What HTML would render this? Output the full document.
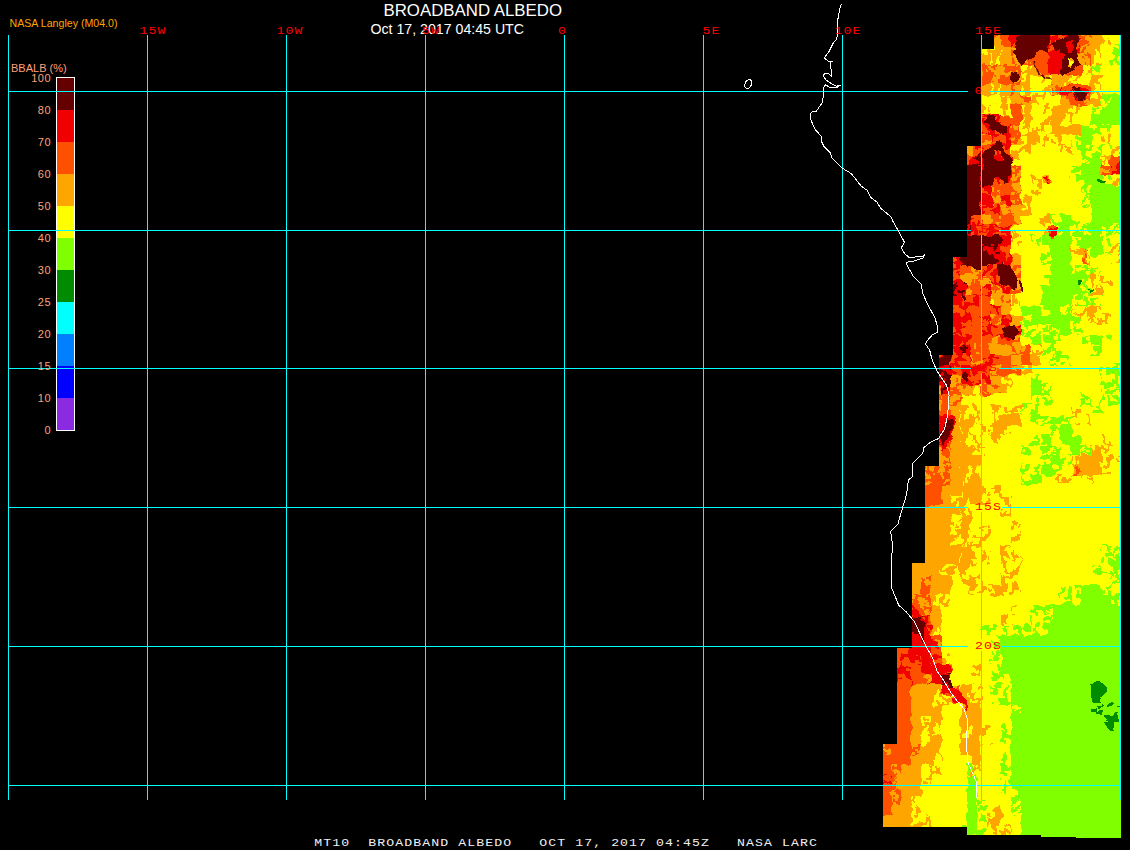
<!DOCTYPE html>
<html><head><meta charset="utf-8"><title>BROADBAND ALBEDO</title>
<style>
html,body{margin:0;padding:0;background:#000;}
body{width:1130px;height:850px;overflow:hidden;position:relative;font-family:"Liberation Sans",sans-serif;}
svg{position:absolute;left:0;top:0;display:block}
.g rect,.d rect,.d polygon{shape-rendering:crispEdges}
text{font-family:"Liberation Sans",sans-serif}
.cb{font-size:11px;fill:#ffa07a;letter-spacing:0.6px}
.mono{font-family:"Liberation Mono",monospace;font-size:12px;letter-spacing:0.98px;fill:#ff0000}
.bot{font-family:"Liberation Mono",monospace;font-size:12px;letter-spacing:0.98px;fill:#f0f0f0;white-space:pre}
.t1{font-size:17px;fill:#fff}
.t2{font-size:15px;fill:#fff}
</style></head><body>
<svg width="1130" height="850" viewBox="0 0 1130 850">
<rect width="1130" height="850" fill="#000"/>
<g class="d">
<defs>
<pattern id="pa" width="32" height="32" patternUnits="userSpaceOnUse"><rect width="32" height="32" fill="#ffa500"/><path d="M0 0h2v2h-2zM4 0h4v2h-4zM20 0h12v2h-12zM0 2h2v2h-2zM4 2h4v2h-4zM14 2h4v2h-4zM20 2h12v2h-12zM0 4h2v2h-2zM14 4h18v2h-18zM14 6h8v2h-8zM24 6h8v2h-8zM16 8h4v2h-4zM24 8h6v2h-6zM0 10h2v2h-2zM16 10h4v2h-4zM26 10h6v2h-6zM0 12h2v2h-2zM16 12h4v2h-4zM26 12h2v2h-2zM30 12h2v2h-2zM0 14h2v2h-2zM12 14h8v2h-8zM22 14h6v2h-6zM0 16h2v2h-2zM12 16h6v2h-6zM22 16h10v2h-10zM8 18h2v2h-2zM16 18h12v2h-12zM8 20h4v2h-4zM16 20h12v2h-12zM8 22h4v2h-4zM16 22h8v2h-8zM30 22h2v2h-2zM6 24h6v2h-6zM16 24h4v2h-4zM28 24h4v2h-4zM6 26h8v2h-8zM26 26h6v2h-6zM0 28h2v2h-2zM6 28h12v2h-12zM26 28h6v2h-6zM4 30h4v2h-4zM10 30h2v2h-2zM14 30h4v2h-4zM20 30h12v2h-12z" fill="#ffff00"/></pattern>
<pattern id="pb" width="32" height="32" patternUnits="userSpaceOnUse"><rect width="32" height="32" fill="#ff5000"/><path d="M8 0h2v2h-2zM16 0h6v2h-6zM24 0h4v2h-4zM6 2h6v2h-6zM28 2h4v2h-4zM0 4h2v2h-2zM4 4h8v2h-8zM28 4h4v2h-4zM0 6h12v2h-12zM24 6h2v2h-2zM30 6h2v2h-2zM0 8h22v2h-22zM0 10h8v2h-8zM12 10h10v2h-10zM2 12h6v2h-6zM12 12h4v2h-4zM26 12h6v2h-6zM0 14h14v2h-14zM18 14h4v2h-4zM24 14h6v2h-6zM0 16h6v2h-6zM10 16h8v2h-8zM20 16h8v2h-8zM0 18h6v2h-6zM10 18h6v2h-6zM22 18h4v2h-4zM30 18h2v2h-2zM2 20h4v2h-4zM10 20h8v2h-8zM30 20h2v2h-2zM10 22h8v2h-8zM22 22h8v2h-8zM6 24h2v2h-2zM14 24h2v2h-2zM20 24h12v2h-12zM0 26h2v2h-2zM14 26h2v2h-2zM22 26h6v2h-6zM30 26h2v2h-2zM0 28h2v2h-2zM14 28h2v2h-2zM22 28h10v2h-10zM0 30h2v2h-2zM6 30h2v2h-2zM22 30h6v2h-6zM30 30h2v2h-2z" fill="#ffa500"/></pattern>
<pattern id="pc" width="32" height="32" patternUnits="userSpaceOnUse"><rect width="32" height="32" fill="#f00000"/><path d="M12 0h2v2h-2zM22 0h6v2h-6zM2 2h8v2h-8zM18 2h12v2h-12zM2 4h8v2h-8zM18 4h10v2h-10zM6 6h4v2h-4zM18 6h2v2h-2zM24 6h2v2h-2zM0 8h14v2h-14zM18 8h10v2h-10zM0 10h14v2h-14zM20 10h8v2h-8zM0 12h14v2h-14zM20 12h4v2h-4zM0 14h4v2h-4zM20 14h2v2h-2zM26 14h6v2h-6zM24 16h6v2h-6zM8 18h6v2h-6zM24 18h8v2h-8zM0 20h2v2h-2zM6 20h8v2h-8zM18 20h4v2h-4zM26 20h6v2h-6zM0 22h4v2h-4zM6 22h26v2h-26zM0 24h4v2h-4zM6 24h14v2h-14zM24 24h4v2h-4zM0 26h4v2h-4zM10 26h10v2h-10zM14 28h4v2h-4zM20 28h4v2h-4zM12 30h6v2h-6zM20 30h6v2h-6z" fill="#ff5000"/></pattern>
<pattern id="pd" width="32" height="32" patternUnits="userSpaceOnUse"><rect width="32" height="32" fill="#640000"/><path d="M0 0h18v2h-18zM28 0h4v2h-4zM6 2h4v2h-4zM12 2h4v2h-4zM20 2h2v2h-2zM26 2h4v2h-4zM0 4h2v2h-2zM4 4h4v2h-4zM18 4h6v2h-6zM28 4h4v2h-4zM0 6h2v2h-2zM4 6h4v2h-4zM16 6h8v2h-8zM28 6h4v2h-4zM6 8h6v2h-6zM16 8h8v2h-8zM28 8h4v2h-4zM6 10h6v2h-6zM16 10h8v2h-8zM28 10h4v2h-4zM8 12h4v2h-4zM16 12h6v2h-6zM28 12h2v2h-2zM10 14h12v2h-12zM26 14h4v2h-4zM12 16h10v2h-10zM26 16h4v2h-4zM14 18h8v2h-8zM0 20h2v2h-2zM6 20h8v2h-8zM18 20h6v2h-6zM6 22h8v2h-8zM18 22h6v2h-6zM0 24h2v2h-2zM6 24h6v2h-6zM24 24h8v2h-8zM0 26h4v2h-4zM6 26h6v2h-6zM16 26h2v2h-2zM24 26h8v2h-8zM0 28h6v2h-6zM8 28h6v2h-6zM28 28h4v2h-4zM0 30h16v2h-16zM30 30h2v2h-2z" fill="#f00000"/></pattern>
<pattern id="pe" width="32" height="32" patternUnits="userSpaceOnUse"><rect width="32" height="32" fill="#ffff00"/><path d="M0 0h6v2h-6zM8 0h16v2h-16zM30 0h2v2h-2zM0 2h12v2h-12zM18 2h4v2h-4zM28 2h2v2h-2zM0 4h14v2h-14zM18 4h2v2h-2zM26 4h6v2h-6zM0 6h4v2h-4zM12 6h2v2h-2zM20 6h2v2h-2zM24 6h4v2h-4zM18 8h8v2h-8zM4 10h6v2h-6zM18 10h8v2h-8zM28 10h4v2h-4zM0 12h2v2h-2zM4 12h4v2h-4zM14 12h2v2h-2zM26 12h6v2h-6zM2 14h6v2h-6zM12 14h4v2h-4zM20 14h2v2h-2zM28 14h4v2h-4zM2 16h4v2h-4zM12 16h4v2h-4zM20 16h10v2h-10zM2 18h4v2h-4zM12 18h2v2h-2zM20 18h10v2h-10zM0 20h6v2h-6zM10 20h4v2h-4zM20 20h12v2h-12zM10 22h4v2h-4zM26 22h6v2h-6zM12 24h2v2h-2zM26 24h4v2h-4zM6 26h8v2h-8zM26 26h4v2h-4zM6 28h10v2h-10zM22 28h8v2h-8zM8 30h18v2h-18zM28 30h4v2h-4z" fill="#7fff00"/></pattern>
<pattern id="pn" width="32" height="32" patternUnits="userSpaceOnUse"><rect width="32" height="32" fill="#7fff00"/><path d="M8 0h6v2h-6zM18 0h4v2h-4zM26 0h4v2h-4zM8 2h4v2h-4zM6 4h2v2h-2zM0 6h8v2h-8zM10 6h6v2h-6zM28 6h4v2h-4zM0 8h16v2h-16zM28 8h4v2h-4zM6 10h12v2h-12zM26 10h6v2h-6zM4 12h4v2h-4zM10 12h12v2h-12zM2 14h8v2h-8zM14 14h10v2h-10zM2 16h2v2h-2zM6 16h18v2h-18zM0 18h4v2h-4zM8 18h10v2h-10zM20 18h4v2h-4zM30 18h2v2h-2zM0 20h6v2h-6zM10 20h6v2h-6zM20 20h2v2h-2zM28 20h4v2h-4zM0 22h8v2h-8zM10 22h4v2h-4zM20 22h4v2h-4zM30 22h2v2h-2zM0 24h2v2h-2zM4 24h2v2h-2zM12 24h12v2h-12zM30 24h2v2h-2zM0 26h6v2h-6zM12 26h10v2h-10zM30 26h2v2h-2zM6 28h2v2h-2zM12 28h12v2h-12zM28 28h4v2h-4zM6 30h4v2h-4zM12 30h2v2h-2zM18 30h6v2h-6zM28 30h4v2h-4z" fill="#008b00"/></pattern>
<clipPath id="swath"><polygon points="994,35 1121,35 1121,838 1076,838 1076,837 1041,837 1041,835 967,835 967,827 883,827 883,744 897,744 897,648 912,648 912,563 925,563 925,466 939,466 939,355 953,355 953,257 967,257 967,146 981,146 981,49 994,49"/></clipPath>
<filter id="wob" filterUnits="userSpaceOnUse" x="870" y="25" width="260" height="825" color-interpolation-filters="sRGB"><feTurbulence type="fractalNoise" baseFrequency="0.09" numOctaves="2" seed="7" result="n"/><feDisplacementMap in="SourceGraphic" in2="n" scale="9" xChannelSelector="R" yChannelSelector="G"/></filter>
</defs>
<g clip-path="url(#swath)"><g filter="url(#wob)">
<rect x="870" y="25" width="260" height="825" fill="#ffff00"/>
<rect x="991" y="25" width="10" height="10" fill="url(#pb)"/>
<rect x="1001" y="25" width="10" height="10" fill="#ff5000"/>
<rect x="1011" y="25" width="10" height="10" fill="#f00000"/>
<rect x="1021" y="25" width="60" height="10" fill="url(#pc)"/>
<rect x="1081" y="25" width="10" height="10" fill="url(#pb)"/>
<rect x="1091" y="25" width="10" height="10" fill="#ffa500"/>
<rect x="1101" y="25" width="10" height="10" fill="url(#pa)"/>
<rect x="991" y="35" width="10" height="10" fill="url(#pb)"/>
<rect x="1001" y="35" width="10" height="10" fill="#ff5000"/>
<rect x="1011" y="35" width="10" height="10" fill="#f00000"/>
<rect x="1021" y="35" width="60" height="10" fill="url(#pc)"/>
<rect x="1081" y="35" width="10" height="10" fill="url(#pb)"/>
<rect x="1091" y="35" width="10" height="10" fill="#ffa500"/>
<rect x="1101" y="35" width="10" height="10" fill="url(#pa)"/>
<rect x="871" y="45" width="130" height="10" fill="url(#pa)"/>
<rect x="1001" y="45" width="10" height="10" fill="#ffa500"/>
<rect x="1011" y="45" width="10" height="10" fill="url(#pb)"/>
<rect x="1021" y="45" width="60" height="10" fill="url(#pc)"/>
<rect x="1081" y="45" width="10" height="10" fill="url(#pb)"/>
<rect x="1091" y="45" width="10" height="10" fill="url(#pa)"/>
<rect x="1111" y="45" width="20" height="10" fill="url(#pe)"/>
<rect x="871" y="55" width="120" height="10" fill="#ffa500"/>
<rect x="991" y="55" width="10" height="10" fill="url(#pa)"/>
<rect x="1001" y="55" width="10" height="10" fill="#ffa500"/>
<rect x="1011" y="55" width="20" height="10" fill="url(#pb)"/>
<rect x="1031" y="55" width="10" height="10" fill="#ff5000"/>
<rect x="1041" y="55" width="10" height="10" fill="url(#pc)"/>
<rect x="1051" y="55" width="10" height="10" fill="#f00000"/>
<rect x="1061" y="55" width="10" height="10" fill="url(#pc)"/>
<rect x="1071" y="55" width="20" height="10" fill="url(#pb)"/>
<rect x="1091" y="55" width="10" height="10" fill="url(#pa)"/>
<rect x="1111" y="55" width="20" height="10" fill="url(#pe)"/>
<rect x="871" y="65" width="150" height="10" fill="url(#pb)"/>
<rect x="1021" y="65" width="10" height="10" fill="url(#pa)"/>
<rect x="1031" y="65" width="10" height="10" fill="#ffa500"/>
<rect x="1041" y="65" width="10" height="10" fill="url(#pc)"/>
<rect x="1051" y="65" width="10" height="10" fill="#f00000"/>
<rect x="1061" y="65" width="10" height="10" fill="url(#pc)"/>
<rect x="1071" y="65" width="10" height="10" fill="#ff5000"/>
<rect x="1081" y="65" width="10" height="10" fill="url(#pa)"/>
<rect x="1091" y="65" width="10" height="10" fill="url(#pe)"/>
<rect x="871" y="75" width="120" height="10" fill="#ff5000"/>
<rect x="991" y="75" width="10" height="10" fill="url(#pb)"/>
<rect x="1001" y="75" width="10" height="10" fill="#ff5000"/>
<rect x="1011" y="75" width="10" height="10" fill="url(#pb)"/>
<rect x="1021" y="75" width="10" height="10" fill="url(#pa)"/>
<rect x="1041" y="75" width="10" height="10" fill="url(#pa)"/>
<rect x="1051" y="75" width="10" height="10" fill="#ffa500"/>
<rect x="1061" y="75" width="20" height="10" fill="url(#pa)"/>
<rect x="1091" y="75" width="10" height="10" fill="url(#pa)"/>
<rect x="871" y="85" width="120" height="10" fill="#ffa500"/>
<rect x="991" y="85" width="10" height="10" fill="url(#pa)"/>
<rect x="1001" y="85" width="10" height="10" fill="#ffa500"/>
<rect x="1011" y="85" width="10" height="10" fill="url(#pb)"/>
<rect x="1021" y="85" width="10" height="10" fill="url(#pa)"/>
<rect x="1041" y="85" width="10" height="10" fill="url(#pa)"/>
<rect x="1051" y="85" width="10" height="10" fill="url(#pb)"/>
<rect x="1061" y="85" width="10" height="10" fill="url(#pc)"/>
<rect x="1071" y="85" width="20" height="10" fill="#ff5000"/>
<rect x="1091" y="85" width="10" height="10" fill="url(#pa)"/>
<rect x="1001" y="95" width="10" height="10" fill="url(#pa)"/>
<rect x="1011" y="95" width="10" height="10" fill="#ffa500"/>
<rect x="1021" y="95" width="10" height="10" fill="url(#pb)"/>
<rect x="1031" y="95" width="20" height="10" fill="url(#pa)"/>
<rect x="1061" y="95" width="30" height="10" fill="url(#pb)"/>
<rect x="1091" y="95" width="10" height="10" fill="url(#pa)"/>
<rect x="1101" y="95" width="10" height="10" fill="url(#pe)"/>
<rect x="1111" y="95" width="20" height="10" fill="#7fff00"/>
<rect x="871" y="105" width="120" height="10" fill="url(#pa)"/>
<rect x="1001" y="105" width="10" height="10" fill="url(#pa)"/>
<rect x="1011" y="105" width="10" height="10" fill="#ff5000"/>
<rect x="1021" y="105" width="10" height="10" fill="url(#pa)"/>
<rect x="1041" y="105" width="10" height="10" fill="url(#pa)"/>
<rect x="1051" y="105" width="10" height="10" fill="#ffa500"/>
<rect x="1061" y="105" width="20" height="10" fill="url(#pa)"/>
<rect x="1091" y="105" width="10" height="10" fill="url(#pe)"/>
<rect x="1101" y="105" width="30" height="10" fill="#7fff00"/>
<rect x="871" y="115" width="130" height="10" fill="url(#pc)"/>
<rect x="1001" y="115" width="20" height="10" fill="#ff5000"/>
<rect x="1021" y="115" width="10" height="10" fill="url(#pa)"/>
<rect x="1041" y="115" width="10" height="10" fill="url(#pa)"/>
<rect x="1051" y="115" width="10" height="10" fill="#ffa500"/>
<rect x="1061" y="115" width="10" height="10" fill="url(#pa)"/>
<rect x="1091" y="115" width="40" height="10" fill="#7fff00"/>
<rect x="871" y="125" width="140" height="10" fill="url(#pc)"/>
<rect x="1011" y="125" width="10" height="10" fill="url(#pb)"/>
<rect x="1021" y="125" width="30" height="10" fill="url(#pa)"/>
<rect x="1051" y="125" width="30" height="10" fill="#ffa500"/>
<rect x="1081" y="125" width="10" height="10" fill="#7fff00"/>
<rect x="1091" y="125" width="20" height="10" fill="url(#pe)"/>
<rect x="871" y="135" width="120" height="10" fill="url(#pb)"/>
<rect x="991" y="135" width="20" height="10" fill="url(#pc)"/>
<rect x="1011" y="135" width="10" height="10" fill="url(#pb)"/>
<rect x="1021" y="135" width="40" height="10" fill="url(#pa)"/>
<rect x="1071" y="135" width="10" height="10" fill="url(#pe)"/>
<rect x="1081" y="135" width="10" height="10" fill="#7fff00"/>
<rect x="1101" y="135" width="10" height="10" fill="url(#pa)"/>
<rect x="871" y="145" width="100" height="10" fill="#ffa500"/>
<rect x="971" y="145" width="40" height="10" fill="url(#pc)"/>
<rect x="1011" y="145" width="20" height="10" fill="url(#pa)"/>
<rect x="1061" y="145" width="10" height="10" fill="url(#pa)"/>
<rect x="1071" y="145" width="40" height="10" fill="url(#pe)"/>
<rect x="1111" y="145" width="20" height="10" fill="url(#pa)"/>
<rect x="871" y="155" width="100" height="10" fill="#ff5000"/>
<rect x="971" y="155" width="10" height="10" fill="url(#pd)"/>
<rect x="981" y="155" width="10" height="10" fill="#f00000"/>
<rect x="991" y="155" width="20" height="10" fill="url(#pc)"/>
<rect x="1011" y="155" width="10" height="10" fill="url(#pa)"/>
<rect x="1081" y="155" width="10" height="10" fill="url(#pe)"/>
<rect x="1091" y="155" width="10" height="10" fill="#7fff00"/>
<rect x="1101" y="155" width="10" height="10" fill="url(#pa)"/>
<rect x="1111" y="155" width="20" height="10" fill="#ff5000"/>
<rect x="871" y="165" width="110" height="10" fill="#640000"/>
<rect x="981" y="165" width="20" height="10" fill="#f00000"/>
<rect x="1001" y="165" width="10" height="10" fill="url(#pc)"/>
<rect x="1011" y="165" width="10" height="10" fill="url(#pb)"/>
<rect x="1071" y="165" width="10" height="10" fill="url(#pe)"/>
<rect x="1081" y="165" width="20" height="10" fill="#7fff00"/>
<rect x="1101" y="165" width="10" height="10" fill="url(#pb)"/>
<rect x="1111" y="165" width="20" height="10" fill="url(#pc)"/>
<rect x="871" y="175" width="110" height="10" fill="#640000"/>
<rect x="981" y="175" width="10" height="10" fill="#f00000"/>
<rect x="991" y="175" width="20" height="10" fill="url(#pc)"/>
<rect x="1011" y="175" width="10" height="10" fill="url(#pb)"/>
<rect x="1031" y="175" width="10" height="10" fill="url(#pa)"/>
<rect x="1041" y="175" width="10" height="10" fill="#ffa500"/>
<rect x="1071" y="175" width="10" height="10" fill="url(#pe)"/>
<rect x="1081" y="175" width="20" height="10" fill="#7fff00"/>
<rect x="1101" y="175" width="10" height="10" fill="url(#pe)"/>
<rect x="1111" y="175" width="20" height="10" fill="url(#pa)"/>
<rect x="871" y="185" width="110" height="10" fill="#640000"/>
<rect x="981" y="185" width="10" height="10" fill="url(#pc)"/>
<rect x="991" y="185" width="10" height="10" fill="url(#pb)"/>
<rect x="1001" y="185" width="10" height="10" fill="#ff5000"/>
<rect x="1011" y="185" width="10" height="10" fill="url(#pb)"/>
<rect x="1031" y="185" width="10" height="10" fill="url(#pa)"/>
<rect x="1081" y="185" width="10" height="10" fill="url(#pe)"/>
<rect x="1091" y="185" width="40" height="10" fill="#7fff00"/>
<rect x="871" y="195" width="110" height="10" fill="#640000"/>
<rect x="981" y="195" width="10" height="10" fill="#f00000"/>
<rect x="991" y="195" width="10" height="10" fill="url(#pb)"/>
<rect x="1001" y="195" width="10" height="10" fill="url(#pc)"/>
<rect x="1011" y="195" width="10" height="10" fill="url(#pb)"/>
<rect x="1021" y="195" width="10" height="10" fill="url(#pa)"/>
<rect x="1081" y="195" width="10" height="10" fill="url(#pe)"/>
<rect x="1091" y="195" width="40" height="10" fill="#7fff00"/>
<rect x="871" y="205" width="110" height="10" fill="#640000"/>
<rect x="981" y="205" width="20" height="10" fill="url(#pc)"/>
<rect x="1001" y="205" width="10" height="10" fill="url(#pb)"/>
<rect x="1011" y="205" width="10" height="10" fill="#ffa500"/>
<rect x="1021" y="205" width="10" height="10" fill="url(#pa)"/>
<rect x="1091" y="205" width="40" height="10" fill="#7fff00"/>
<rect x="871" y="215" width="100" height="10" fill="#640000"/>
<rect x="971" y="215" width="10" height="10" fill="url(#pc)"/>
<rect x="981" y="215" width="10" height="10" fill="#ffa500"/>
<rect x="991" y="215" width="10" height="10" fill="url(#pb)"/>
<rect x="1001" y="215" width="10" height="10" fill="#ff5000"/>
<rect x="1011" y="215" width="10" height="10" fill="url(#pb)"/>
<rect x="1041" y="215" width="10" height="10" fill="url(#pa)"/>
<rect x="1051" y="215" width="10" height="10" fill="url(#pe)"/>
<rect x="1061" y="215" width="10" height="10" fill="#7fff00"/>
<rect x="1071" y="215" width="10" height="10" fill="url(#pe)"/>
<rect x="1091" y="215" width="40" height="10" fill="#7fff00"/>
<rect x="871" y="225" width="100" height="10" fill="url(#pd)"/>
<rect x="971" y="225" width="40" height="10" fill="url(#pc)"/>
<rect x="1011" y="225" width="10" height="10" fill="url(#pa)"/>
<rect x="1041" y="225" width="10" height="10" fill="url(#pa)"/>
<rect x="1051" y="225" width="10" height="10" fill="url(#pe)"/>
<rect x="1061" y="225" width="10" height="10" fill="#7fff00"/>
<rect x="1071" y="225" width="20" height="10" fill="url(#pe)"/>
<rect x="1091" y="225" width="10" height="10" fill="#7fff00"/>
<rect x="1101" y="225" width="30" height="10" fill="url(#pe)"/>
<rect x="871" y="235" width="120" height="10" fill="#640000"/>
<rect x="991" y="235" width="10" height="10" fill="url(#pd)"/>
<rect x="1001" y="235" width="10" height="10" fill="#f00000"/>
<rect x="1011" y="235" width="10" height="10" fill="url(#pa)"/>
<rect x="1031" y="235" width="10" height="10" fill="url(#pe)"/>
<rect x="1041" y="235" width="30" height="10" fill="#7fff00"/>
<rect x="1071" y="235" width="10" height="10" fill="url(#pe)"/>
<rect x="1081" y="235" width="20" height="10" fill="#7fff00"/>
<rect x="1101" y="235" width="10" height="10" fill="url(#pe)"/>
<rect x="871" y="245" width="110" height="10" fill="#640000"/>
<rect x="981" y="245" width="20" height="10" fill="url(#pd)"/>
<rect x="1001" y="245" width="10" height="10" fill="url(#pc)"/>
<rect x="1041" y="245" width="10" height="10" fill="url(#pe)"/>
<rect x="1051" y="245" width="20" height="10" fill="#7fff00"/>
<rect x="1071" y="245" width="10" height="10" fill="url(#pa)"/>
<rect x="1081" y="245" width="10" height="10" fill="url(#pe)"/>
<rect x="1091" y="245" width="10" height="10" fill="#7fff00"/>
<rect x="1101" y="245" width="10" height="10" fill="url(#pe)"/>
<rect x="1111" y="245" width="20" height="10" fill="url(#pa)"/>
<rect x="871" y="255" width="90" height="10" fill="url(#pc)"/>
<rect x="961" y="255" width="10" height="10" fill="url(#pd)"/>
<rect x="971" y="255" width="20" height="10" fill="#640000"/>
<rect x="991" y="255" width="10" height="10" fill="url(#pd)"/>
<rect x="1001" y="255" width="10" height="10" fill="url(#pc)"/>
<rect x="1011" y="255" width="10" height="10" fill="#ffa500"/>
<rect x="1041" y="255" width="10" height="10" fill="url(#pe)"/>
<rect x="1051" y="255" width="20" height="10" fill="#7fff00"/>
<rect x="1081" y="255" width="10" height="10" fill="url(#pa)"/>
<rect x="1111" y="255" width="20" height="10" fill="url(#pa)"/>
<rect x="871" y="265" width="90" height="10" fill="url(#pc)"/>
<rect x="961" y="265" width="10" height="10" fill="#ff5000"/>
<rect x="971" y="265" width="10" height="10" fill="url(#pb)"/>
<rect x="981" y="265" width="30" height="10" fill="url(#pc)"/>
<rect x="1011" y="265" width="10" height="10" fill="url(#pb)"/>
<rect x="1051" y="265" width="20" height="10" fill="#7fff00"/>
<rect x="1071" y="265" width="30" height="10" fill="url(#pe)"/>
<rect x="871" y="275" width="90" height="10" fill="url(#pc)"/>
<rect x="961" y="275" width="10" height="10" fill="#ffa500"/>
<rect x="971" y="275" width="20" height="10" fill="url(#pb)"/>
<rect x="991" y="275" width="20" height="10" fill="url(#pc)"/>
<rect x="1011" y="275" width="10" height="10" fill="url(#pb)"/>
<rect x="1041" y="275" width="10" height="10" fill="url(#pe)"/>
<rect x="1051" y="275" width="30" height="10" fill="#7fff00"/>
<rect x="1081" y="275" width="10" height="10" fill="url(#pe)"/>
<rect x="1091" y="275" width="20" height="10" fill="url(#pa)"/>
<rect x="871" y="285" width="90" height="10" fill="url(#pd)"/>
<rect x="961" y="285" width="10" height="10" fill="url(#pb)"/>
<rect x="971" y="285" width="10" height="10" fill="#ff5000"/>
<rect x="981" y="285" width="10" height="10" fill="url(#pc)"/>
<rect x="991" y="285" width="10" height="10" fill="url(#pb)"/>
<rect x="1001" y="285" width="10" height="10" fill="url(#pc)"/>
<rect x="1011" y="285" width="10" height="10" fill="url(#pb)"/>
<rect x="1041" y="285" width="40" height="10" fill="#7fff00"/>
<rect x="1081" y="285" width="10" height="10" fill="url(#pe)"/>
<rect x="1091" y="285" width="10" height="10" fill="url(#pa)"/>
<rect x="871" y="295" width="90" height="10" fill="#f00000"/>
<rect x="961" y="295" width="20" height="10" fill="url(#pc)"/>
<rect x="981" y="295" width="10" height="10" fill="#ff5000"/>
<rect x="991" y="295" width="10" height="10" fill="url(#pa)"/>
<rect x="1001" y="295" width="10" height="10" fill="url(#pb)"/>
<rect x="1011" y="295" width="10" height="10" fill="url(#pa)"/>
<rect x="1041" y="295" width="30" height="10" fill="#7fff00"/>
<rect x="1071" y="295" width="30" height="10" fill="url(#pe)"/>
<rect x="871" y="305" width="100" height="10" fill="url(#pc)"/>
<rect x="971" y="305" width="20" height="10" fill="#ff5000"/>
<rect x="991" y="305" width="10" height="10" fill="url(#pc)"/>
<rect x="1001" y="305" width="10" height="10" fill="#ffa500"/>
<rect x="1021" y="305" width="20" height="10" fill="#7fff00"/>
<rect x="1041" y="305" width="10" height="10" fill="url(#pe)"/>
<rect x="1051" y="305" width="10" height="10" fill="#7fff00"/>
<rect x="1061" y="305" width="10" height="10" fill="url(#pe)"/>
<rect x="1071" y="305" width="30" height="10" fill="url(#pa)"/>
<rect x="871" y="315" width="90" height="10" fill="#f00000"/>
<rect x="961" y="315" width="10" height="10" fill="url(#pc)"/>
<rect x="971" y="315" width="10" height="10" fill="#ff5000"/>
<rect x="981" y="315" width="10" height="10" fill="url(#pc)"/>
<rect x="991" y="315" width="10" height="10" fill="url(#pb)"/>
<rect x="1001" y="315" width="10" height="10" fill="url(#pc)"/>
<rect x="1011" y="315" width="10" height="10" fill="#ffa500"/>
<rect x="1021" y="315" width="10" height="10" fill="url(#pe)"/>
<rect x="1031" y="315" width="40" height="10" fill="#7fff00"/>
<rect x="1071" y="315" width="10" height="10" fill="url(#pe)"/>
<rect x="1081" y="315" width="30" height="10" fill="url(#pa)"/>
<rect x="871" y="325" width="100" height="10" fill="url(#pc)"/>
<rect x="971" y="325" width="10" height="10" fill="#ff5000"/>
<rect x="981" y="325" width="40" height="10" fill="url(#pc)"/>
<rect x="1021" y="325" width="40" height="10" fill="url(#pe)"/>
<rect x="1061" y="325" width="10" height="10" fill="#7fff00"/>
<rect x="1071" y="325" width="10" height="10" fill="url(#pe)"/>
<rect x="871" y="335" width="90" height="10" fill="#f00000"/>
<rect x="961" y="335" width="10" height="10" fill="url(#pc)"/>
<rect x="971" y="335" width="20" height="10" fill="#ff5000"/>
<rect x="991" y="335" width="10" height="10" fill="url(#pb)"/>
<rect x="1001" y="335" width="10" height="10" fill="url(#pc)"/>
<rect x="1011" y="335" width="10" height="10" fill="url(#pb)"/>
<rect x="1031" y="335" width="10" height="10" fill="#7fff00"/>
<rect x="1041" y="335" width="20" height="10" fill="url(#pe)"/>
<rect x="1081" y="335" width="10" height="10" fill="url(#pe)"/>
<rect x="1091" y="335" width="10" height="10" fill="#7fff00"/>
<rect x="1101" y="335" width="10" height="10" fill="url(#pe)"/>
<rect x="871" y="345" width="90" height="10" fill="url(#pc)"/>
<rect x="961" y="345" width="10" height="10" fill="url(#pd)"/>
<rect x="971" y="345" width="10" height="10" fill="url(#pb)"/>
<rect x="981" y="345" width="10" height="10" fill="#ff5000"/>
<rect x="991" y="345" width="20" height="10" fill="#ffa500"/>
<rect x="1011" y="345" width="20" height="10" fill="url(#pb)"/>
<rect x="1031" y="345" width="10" height="10" fill="url(#pa)"/>
<rect x="1041" y="345" width="20" height="10" fill="url(#pe)"/>
<rect x="1091" y="345" width="10" height="10" fill="url(#pe)"/>
<rect x="871" y="355" width="80" height="10" fill="#640000"/>
<rect x="951" y="355" width="20" height="10" fill="url(#pc)"/>
<rect x="971" y="355" width="10" height="10" fill="url(#pb)"/>
<rect x="981" y="355" width="20" height="10" fill="url(#pc)"/>
<rect x="1001" y="355" width="10" height="10" fill="#ff5000"/>
<rect x="1011" y="355" width="10" height="10" fill="#ffa500"/>
<rect x="1021" y="355" width="10" height="10" fill="#ff5000"/>
<rect x="1031" y="355" width="10" height="10" fill="#ffa500"/>
<rect x="1051" y="355" width="20" height="10" fill="url(#pe)"/>
<rect x="871" y="365" width="80" height="10" fill="url(#pd)"/>
<rect x="951" y="365" width="10" height="10" fill="url(#pc)"/>
<rect x="961" y="365" width="10" height="10" fill="#f00000"/>
<rect x="971" y="365" width="20" height="10" fill="url(#pc)"/>
<rect x="991" y="365" width="10" height="10" fill="url(#pb)"/>
<rect x="1001" y="365" width="10" height="10" fill="#ff5000"/>
<rect x="1011" y="365" width="10" height="10" fill="url(#pb)"/>
<rect x="1021" y="365" width="10" height="10" fill="url(#pa)"/>
<rect x="1101" y="365" width="30" height="10" fill="url(#pe)"/>
<rect x="871" y="375" width="80" height="10" fill="url(#pd)"/>
<rect x="951" y="375" width="10" height="10" fill="url(#pb)"/>
<rect x="961" y="375" width="30" height="10" fill="url(#pc)"/>
<rect x="991" y="375" width="10" height="10" fill="#ffa500"/>
<rect x="1001" y="375" width="10" height="10" fill="url(#pa)"/>
<rect x="1031" y="375" width="10" height="10" fill="url(#pe)"/>
<rect x="1101" y="375" width="30" height="10" fill="url(#pe)"/>
<rect x="871" y="385" width="70" height="10" fill="url(#pb)"/>
<rect x="941" y="385" width="10" height="10" fill="url(#pd)"/>
<rect x="951" y="385" width="20" height="10" fill="url(#pb)"/>
<rect x="971" y="385" width="10" height="10" fill="url(#pa)"/>
<rect x="981" y="385" width="20" height="10" fill="url(#pb)"/>
<rect x="1001" y="385" width="10" height="10" fill="url(#pa)"/>
<rect x="1031" y="385" width="10" height="10" fill="#7fff00"/>
<rect x="1041" y="385" width="10" height="10" fill="url(#pe)"/>
<rect x="1101" y="385" width="30" height="10" fill="url(#pe)"/>
<rect x="871" y="395" width="70" height="10" fill="url(#pb)"/>
<rect x="941" y="395" width="10" height="10" fill="#ff5000"/>
<rect x="951" y="395" width="10" height="10" fill="url(#pb)"/>
<rect x="1031" y="395" width="20" height="10" fill="url(#pe)"/>
<rect x="1081" y="395" width="10" height="10" fill="url(#pe)"/>
<rect x="1101" y="395" width="30" height="10" fill="url(#pe)"/>
<rect x="871" y="405" width="70" height="10" fill="url(#pb)"/>
<rect x="941" y="405" width="10" height="10" fill="#ff5000"/>
<rect x="951" y="405" width="10" height="10" fill="#ffa500"/>
<rect x="961" y="405" width="20" height="10" fill="url(#pa)"/>
<rect x="991" y="405" width="30" height="10" fill="url(#pa)"/>
<rect x="1021" y="405" width="20" height="10" fill="url(#pe)"/>
<rect x="1071" y="405" width="10" height="10" fill="url(#pa)"/>
<rect x="1091" y="405" width="10" height="10" fill="url(#pe)"/>
<rect x="871" y="415" width="70" height="10" fill="url(#pc)"/>
<rect x="941" y="415" width="10" height="10" fill="url(#pb)"/>
<rect x="951" y="415" width="10" height="10" fill="#ffa500"/>
<rect x="961" y="415" width="40" height="10" fill="url(#pa)"/>
<rect x="1001" y="415" width="20" height="10" fill="#ffa500"/>
<rect x="1031" y="415" width="20" height="10" fill="url(#pe)"/>
<rect x="1051" y="415" width="10" height="10" fill="#7fff00"/>
<rect x="1061" y="415" width="10" height="10" fill="url(#pe)"/>
<rect x="1071" y="415" width="20" height="10" fill="url(#pa)"/>
<rect x="871" y="425" width="70" height="10" fill="url(#pc)"/>
<rect x="941" y="425" width="10" height="10" fill="url(#pb)"/>
<rect x="951" y="425" width="10" height="10" fill="#ffa500"/>
<rect x="961" y="425" width="10" height="10" fill="url(#pa)"/>
<rect x="981" y="425" width="30" height="10" fill="url(#pa)"/>
<rect x="1051" y="425" width="10" height="10" fill="url(#pe)"/>
<rect x="1061" y="425" width="10" height="10" fill="#7fff00"/>
<rect x="871" y="435" width="70" height="10" fill="url(#pc)"/>
<rect x="941" y="435" width="10" height="10" fill="url(#pb)"/>
<rect x="951" y="435" width="10" height="10" fill="#ffa500"/>
<rect x="961" y="435" width="20" height="10" fill="url(#pa)"/>
<rect x="991" y="435" width="10" height="10" fill="url(#pa)"/>
<rect x="1031" y="435" width="10" height="10" fill="url(#pe)"/>
<rect x="1041" y="435" width="10" height="10" fill="#7fff00"/>
<rect x="1061" y="435" width="20" height="10" fill="#7fff00"/>
<rect x="1101" y="435" width="10" height="10" fill="url(#pa)"/>
<rect x="871" y="445" width="80" height="10" fill="url(#pb)"/>
<rect x="951" y="445" width="20" height="10" fill="#ffa500"/>
<rect x="971" y="445" width="20" height="10" fill="url(#pa)"/>
<rect x="1021" y="445" width="10" height="10" fill="url(#pe)"/>
<rect x="1041" y="445" width="20" height="10" fill="url(#pe)"/>
<rect x="1071" y="445" width="10" height="10" fill="#7fff00"/>
<rect x="1081" y="445" width="10" height="10" fill="url(#pe)"/>
<rect x="1091" y="445" width="40" height="10" fill="url(#pa)"/>
<rect x="871" y="455" width="70" height="10" fill="#ffa500"/>
<rect x="941" y="455" width="10" height="10" fill="url(#pb)"/>
<rect x="951" y="455" width="30" height="10" fill="#ffa500"/>
<rect x="1041" y="455" width="10" height="10" fill="url(#pe)"/>
<rect x="1051" y="455" width="10" height="10" fill="#7fff00"/>
<rect x="1061" y="455" width="10" height="10" fill="url(#pe)"/>
<rect x="1071" y="455" width="10" height="10" fill="url(#pa)"/>
<rect x="1081" y="455" width="10" height="10" fill="#ffa500"/>
<rect x="1091" y="455" width="40" height="10" fill="url(#pa)"/>
<rect x="871" y="465" width="80" height="10" fill="url(#pb)"/>
<rect x="951" y="465" width="10" height="10" fill="#ffa500"/>
<rect x="961" y="465" width="20" height="10" fill="url(#pa)"/>
<rect x="1021" y="465" width="20" height="10" fill="url(#pe)"/>
<rect x="1041" y="465" width="10" height="10" fill="#7fff00"/>
<rect x="1051" y="465" width="10" height="10" fill="url(#pe)"/>
<rect x="1071" y="465" width="10" height="10" fill="url(#pb)"/>
<rect x="1081" y="465" width="20" height="10" fill="#ffa500"/>
<rect x="1101" y="465" width="10" height="10" fill="url(#pa)"/>
<rect x="871" y="475" width="60" height="10" fill="url(#pb)"/>
<rect x="931" y="475" width="10" height="10" fill="#ff5000"/>
<rect x="941" y="475" width="10" height="10" fill="url(#pb)"/>
<rect x="951" y="475" width="10" height="10" fill="#ffa500"/>
<rect x="961" y="475" width="10" height="10" fill="url(#pa)"/>
<rect x="971" y="475" width="10" height="10" fill="#ffa500"/>
<rect x="1021" y="475" width="10" height="10" fill="url(#pe)"/>
<rect x="1031" y="475" width="10" height="10" fill="#7fff00"/>
<rect x="1051" y="475" width="20" height="10" fill="url(#pa)"/>
<rect x="1081" y="475" width="10" height="10" fill="url(#pa)"/>
<rect x="871" y="485" width="70" height="10" fill="#ff5000"/>
<rect x="941" y="485" width="20" height="10" fill="#ffa500"/>
<rect x="961" y="485" width="10" height="10" fill="url(#pa)"/>
<rect x="971" y="485" width="10" height="10" fill="#ffa500"/>
<rect x="981" y="485" width="20" height="10" fill="url(#pa)"/>
<rect x="871" y="495" width="70" height="10" fill="#ff5000"/>
<rect x="941" y="495" width="10" height="10" fill="#ffa500"/>
<rect x="951" y="495" width="20" height="10" fill="url(#pa)"/>
<rect x="971" y="495" width="10" height="10" fill="#ffa500"/>
<rect x="981" y="495" width="10" height="10" fill="url(#pa)"/>
<rect x="1001" y="495" width="10" height="10" fill="url(#pa)"/>
<rect x="871" y="505" width="90" height="10" fill="#ffa500"/>
<rect x="961" y="505" width="10" height="10" fill="url(#pa)"/>
<rect x="1001" y="505" width="10" height="10" fill="url(#pa)"/>
<rect x="871" y="515" width="80" height="10" fill="#ffa500"/>
<rect x="951" y="515" width="20" height="10" fill="url(#pa)"/>
<rect x="1011" y="515" width="10" height="10" fill="url(#pa)"/>
<rect x="871" y="525" width="80" height="10" fill="#ffa500"/>
<rect x="951" y="525" width="20" height="10" fill="url(#pa)"/>
<rect x="981" y="525" width="10" height="10" fill="url(#pa)"/>
<rect x="1011" y="525" width="10" height="10" fill="url(#pa)"/>
<rect x="871" y="535" width="80" height="10" fill="#ffa500"/>
<rect x="951" y="535" width="40" height="10" fill="url(#pa)"/>
<rect x="1011" y="535" width="10" height="10" fill="url(#pa)"/>
<rect x="871" y="545" width="90" height="10" fill="#ffa500"/>
<rect x="961" y="545" width="30" height="10" fill="url(#pa)"/>
<rect x="1001" y="545" width="20" height="10" fill="url(#pa)"/>
<rect x="1101" y="545" width="30" height="10" fill="url(#pe)"/>
<rect x="871" y="555" width="90" height="10" fill="#ffa500"/>
<rect x="961" y="555" width="30" height="10" fill="url(#pa)"/>
<rect x="1001" y="555" width="20" height="10" fill="url(#pa)"/>
<rect x="1101" y="555" width="30" height="10" fill="url(#pe)"/>
<rect x="871" y="565" width="70" height="10" fill="#ffa500"/>
<rect x="941" y="565" width="30" height="10" fill="url(#pa)"/>
<rect x="1001" y="565" width="20" height="10" fill="url(#pa)"/>
<rect x="1091" y="565" width="40" height="10" fill="url(#pe)"/>
<rect x="871" y="575" width="50" height="10" fill="#ffa500"/>
<rect x="921" y="575" width="10" height="10" fill="url(#pb)"/>
<rect x="931" y="575" width="20" height="10" fill="#ffa500"/>
<rect x="961" y="575" width="30" height="10" fill="url(#pa)"/>
<rect x="1001" y="575" width="20" height="10" fill="url(#pa)"/>
<rect x="1111" y="575" width="20" height="10" fill="url(#pe)"/>
<rect x="871" y="585" width="50" height="10" fill="#ffa500"/>
<rect x="921" y="585" width="10" height="10" fill="#ff5000"/>
<rect x="931" y="585" width="20" height="10" fill="#ffa500"/>
<rect x="971" y="585" width="50" height="10" fill="url(#pa)"/>
<rect x="1061" y="585" width="20" height="10" fill="url(#pe)"/>
<rect x="1081" y="585" width="20" height="10" fill="#7fff00"/>
<rect x="1101" y="585" width="10" height="10" fill="url(#pe)"/>
<rect x="871" y="595" width="60" height="10" fill="url(#pb)"/>
<rect x="931" y="595" width="20" height="10" fill="url(#pa)"/>
<rect x="1061" y="595" width="20" height="10" fill="url(#pe)"/>
<rect x="1081" y="595" width="30" height="10" fill="#7fff00"/>
<rect x="1111" y="595" width="20" height="10" fill="url(#pe)"/>
<rect x="871" y="605" width="50" height="10" fill="#ff5000"/>
<rect x="921" y="605" width="10" height="10" fill="url(#pb)"/>
<rect x="931" y="605" width="10" height="10" fill="#ffa500"/>
<rect x="1011" y="605" width="10" height="10" fill="url(#pa)"/>
<rect x="1031" y="605" width="20" height="10" fill="url(#pe)"/>
<rect x="1051" y="605" width="80" height="10" fill="#7fff00"/>
<rect x="871" y="615" width="50" height="10" fill="url(#pd)"/>
<rect x="921" y="615" width="10" height="10" fill="url(#pc)"/>
<rect x="931" y="615" width="10" height="10" fill="url(#pa)"/>
<rect x="1001" y="615" width="10" height="10" fill="url(#pa)"/>
<rect x="1031" y="615" width="20" height="10" fill="url(#pe)"/>
<rect x="1051" y="615" width="80" height="10" fill="#7fff00"/>
<rect x="871" y="625" width="50" height="10" fill="url(#pd)"/>
<rect x="921" y="625" width="10" height="10" fill="url(#pc)"/>
<rect x="931" y="625" width="10" height="10" fill="url(#pa)"/>
<rect x="981" y="625" width="70" height="10" fill="url(#pe)"/>
<rect x="1051" y="625" width="80" height="10" fill="#7fff00"/>
<rect x="871" y="635" width="50" height="10" fill="#f00000"/>
<rect x="921" y="635" width="10" height="10" fill="url(#pd)"/>
<rect x="931" y="635" width="10" height="10" fill="url(#pb)"/>
<rect x="991" y="635" width="10" height="10" fill="url(#pe)"/>
<rect x="1001" y="635" width="130" height="10" fill="#7fff00"/>
<rect x="871" y="645" width="30" height="10" fill="#ff5000"/>
<rect x="901" y="645" width="10" height="10" fill="url(#pc)"/>
<rect x="911" y="645" width="20" height="10" fill="#f00000"/>
<rect x="931" y="645" width="10" height="10" fill="#ff5000"/>
<rect x="991" y="645" width="10" height="10" fill="url(#pe)"/>
<rect x="1001" y="645" width="130" height="10" fill="#7fff00"/>
<rect x="871" y="655" width="30" height="10" fill="#ff5000"/>
<rect x="901" y="655" width="20" height="10" fill="url(#pc)"/>
<rect x="921" y="655" width="10" height="10" fill="#f00000"/>
<rect x="931" y="655" width="10" height="10" fill="url(#pc)"/>
<rect x="941" y="655" width="10" height="10" fill="url(#pa)"/>
<rect x="991" y="655" width="10" height="10" fill="url(#pe)"/>
<rect x="1001" y="655" width="130" height="10" fill="#7fff00"/>
<rect x="871" y="665" width="40" height="10" fill="url(#pc)"/>
<rect x="911" y="665" width="10" height="10" fill="#ff5000"/>
<rect x="921" y="665" width="10" height="10" fill="url(#pc)"/>
<rect x="931" y="665" width="10" height="10" fill="#f00000"/>
<rect x="941" y="665" width="10" height="10" fill="#ff5000"/>
<rect x="971" y="665" width="10" height="10" fill="url(#pa)"/>
<rect x="991" y="665" width="10" height="10" fill="url(#pe)"/>
<rect x="1001" y="665" width="130" height="10" fill="#7fff00"/>
<rect x="871" y="675" width="40" height="10" fill="url(#pc)"/>
<rect x="911" y="675" width="10" height="10" fill="#ff5000"/>
<rect x="921" y="675" width="10" height="10" fill="url(#pb)"/>
<rect x="931" y="675" width="10" height="10" fill="#f00000"/>
<rect x="941" y="675" width="10" height="10" fill="url(#pd)"/>
<rect x="991" y="675" width="20" height="10" fill="url(#pe)"/>
<rect x="1011" y="675" width="120" height="10" fill="#7fff00"/>
<rect x="871" y="685" width="40" height="10" fill="#ff5000"/>
<rect x="911" y="685" width="20" height="10" fill="#ffa500"/>
<rect x="931" y="685" width="10" height="10" fill="url(#pa)"/>
<rect x="941" y="685" width="10" height="10" fill="url(#pc)"/>
<rect x="951" y="685" width="10" height="10" fill="url(#pb)"/>
<rect x="961" y="685" width="20" height="10" fill="url(#pa)"/>
<rect x="991" y="685" width="20" height="10" fill="url(#pe)"/>
<rect x="1011" y="685" width="120" height="10" fill="#7fff00"/>
<rect x="871" y="695" width="40" height="10" fill="#ff5000"/>
<rect x="911" y="695" width="20" height="10" fill="#ffa500"/>
<rect x="931" y="695" width="20" height="10" fill="url(#pa)"/>
<rect x="951" y="695" width="10" height="10" fill="url(#pc)"/>
<rect x="961" y="695" width="10" height="10" fill="#ffa500"/>
<rect x="971" y="695" width="10" height="10" fill="url(#pa)"/>
<rect x="991" y="695" width="20" height="10" fill="url(#pe)"/>
<rect x="1011" y="695" width="120" height="10" fill="#7fff00"/>
<rect x="871" y="705" width="40" height="10" fill="#ff5000"/>
<rect x="911" y="705" width="20" height="10" fill="#ffa500"/>
<rect x="931" y="705" width="10" height="10" fill="url(#pa)"/>
<rect x="961" y="705" width="20" height="10" fill="#ffa500"/>
<rect x="1011" y="705" width="10" height="10" fill="url(#pe)"/>
<rect x="1021" y="705" width="110" height="10" fill="#7fff00"/>
<rect x="871" y="715" width="40" height="10" fill="#ff5000"/>
<rect x="911" y="715" width="10" height="10" fill="#ffa500"/>
<rect x="921" y="715" width="20" height="10" fill="url(#pa)"/>
<rect x="961" y="715" width="20" height="10" fill="#ffa500"/>
<rect x="1011" y="715" width="120" height="10" fill="#7fff00"/>
<rect x="871" y="725" width="40" height="10" fill="#ff5000"/>
<rect x="911" y="725" width="10" height="10" fill="#ffa500"/>
<rect x="921" y="725" width="20" height="10" fill="url(#pa)"/>
<rect x="961" y="725" width="10" height="10" fill="url(#pa)"/>
<rect x="971" y="725" width="10" height="10" fill="#ffa500"/>
<rect x="981" y="725" width="10" height="10" fill="url(#pa)"/>
<rect x="1001" y="725" width="10" height="10" fill="url(#pe)"/>
<rect x="1011" y="725" width="120" height="10" fill="#7fff00"/>
<rect x="871" y="735" width="40" height="10" fill="#ff5000"/>
<rect x="911" y="735" width="10" height="10" fill="#ffa500"/>
<rect x="921" y="735" width="10" height="10" fill="url(#pa)"/>
<rect x="931" y="735" width="10" height="10" fill="#ffa500"/>
<rect x="961" y="735" width="10" height="10" fill="url(#pa)"/>
<rect x="971" y="735" width="10" height="10" fill="#ffa500"/>
<rect x="981" y="735" width="10" height="10" fill="url(#pa)"/>
<rect x="1001" y="735" width="10" height="10" fill="url(#pe)"/>
<rect x="1011" y="735" width="120" height="10" fill="#7fff00"/>
<rect x="871" y="745" width="20" height="10" fill="url(#pb)"/>
<rect x="891" y="745" width="20" height="10" fill="#ff5000"/>
<rect x="911" y="745" width="10" height="10" fill="url(#pb)"/>
<rect x="921" y="745" width="10" height="10" fill="#ffa500"/>
<rect x="931" y="745" width="10" height="10" fill="url(#pa)"/>
<rect x="961" y="745" width="10" height="10" fill="url(#pa)"/>
<rect x="971" y="745" width="10" height="10" fill="#ffa500"/>
<rect x="1011" y="745" width="120" height="10" fill="#7fff00"/>
<rect x="871" y="755" width="40" height="10" fill="#ff5000"/>
<rect x="911" y="755" width="20" height="10" fill="#ffa500"/>
<rect x="931" y="755" width="10" height="10" fill="url(#pa)"/>
<rect x="971" y="755" width="10" height="10" fill="#ffa500"/>
<rect x="1001" y="755" width="10" height="10" fill="url(#pe)"/>
<rect x="1011" y="755" width="120" height="10" fill="#7fff00"/>
<rect x="871" y="765" width="20" height="10" fill="#ff5000"/>
<rect x="891" y="765" width="10" height="10" fill="url(#pb)"/>
<rect x="901" y="765" width="20" height="10" fill="#ffa500"/>
<rect x="921" y="765" width="20" height="10" fill="url(#pa)"/>
<rect x="961" y="765" width="10" height="10" fill="url(#pe)"/>
<rect x="971" y="765" width="10" height="10" fill="url(#pa)"/>
<rect x="1001" y="765" width="10" height="10" fill="url(#pe)"/>
<rect x="1011" y="765" width="120" height="10" fill="#7fff00"/>
<rect x="871" y="775" width="20" height="10" fill="url(#pc)"/>
<rect x="891" y="775" width="10" height="10" fill="url(#pb)"/>
<rect x="901" y="775" width="20" height="10" fill="#ffa500"/>
<rect x="921" y="775" width="10" height="10" fill="url(#pa)"/>
<rect x="961" y="775" width="10" height="10" fill="url(#pe)"/>
<rect x="971" y="775" width="10" height="10" fill="url(#pa)"/>
<rect x="1001" y="775" width="10" height="10" fill="url(#pe)"/>
<rect x="1011" y="775" width="120" height="10" fill="#7fff00"/>
<rect x="871" y="785" width="20" height="10" fill="#ff5000"/>
<rect x="891" y="785" width="10" height="10" fill="url(#pb)"/>
<rect x="901" y="785" width="20" height="10" fill="#ffa500"/>
<rect x="961" y="785" width="20" height="10" fill="url(#pe)"/>
<rect x="1001" y="785" width="20" height="10" fill="url(#pe)"/>
<rect x="1021" y="785" width="110" height="10" fill="#7fff00"/>
<rect x="871" y="795" width="20" height="10" fill="#ff5000"/>
<rect x="891" y="795" width="10" height="10" fill="url(#pb)"/>
<rect x="901" y="795" width="10" height="10" fill="#ffa500"/>
<rect x="911" y="795" width="10" height="10" fill="url(#pa)"/>
<rect x="961" y="795" width="20" height="10" fill="url(#pe)"/>
<rect x="1011" y="795" width="10" height="10" fill="url(#pe)"/>
<rect x="1021" y="795" width="110" height="10" fill="#7fff00"/>
<rect x="871" y="805" width="20" height="10" fill="#ff5000"/>
<rect x="891" y="805" width="20" height="10" fill="#ffa500"/>
<rect x="911" y="805" width="10" height="10" fill="url(#pa)"/>
<rect x="961" y="805" width="20" height="10" fill="url(#pe)"/>
<rect x="991" y="805" width="10" height="10" fill="url(#pa)"/>
<rect x="1011" y="805" width="10" height="10" fill="url(#pe)"/>
<rect x="1021" y="805" width="110" height="10" fill="#7fff00"/>
<rect x="871" y="815" width="40" height="10" fill="#ffa500"/>
<rect x="911" y="815" width="20" height="10" fill="url(#pa)"/>
<rect x="961" y="815" width="20" height="10" fill="url(#pe)"/>
<rect x="981" y="815" width="20" height="10" fill="url(#pa)"/>
<rect x="1021" y="815" width="110" height="10" fill="#7fff00"/>
<rect x="871" y="825" width="40" height="10" fill="#ffa500"/>
<rect x="911" y="825" width="20" height="10" fill="url(#pa)"/>
<rect x="961" y="825" width="10" height="10" fill="#7fff00"/>
<rect x="971" y="825" width="10" height="10" fill="url(#pe)"/>
<rect x="981" y="825" width="30" height="10" fill="url(#pa)"/>
<rect x="1021" y="825" width="110" height="10" fill="#7fff00"/>
<rect x="871" y="835" width="40" height="10" fill="#ffa500"/>
<rect x="911" y="835" width="20" height="10" fill="url(#pa)"/>
<rect x="961" y="835" width="10" height="10" fill="#7fff00"/>
<rect x="971" y="835" width="10" height="10" fill="url(#pe)"/>
<rect x="981" y="835" width="30" height="10" fill="url(#pa)"/>
<rect x="1021" y="835" width="110" height="10" fill="#7fff00"/>
<rect x="871" y="845" width="40" height="10" fill="#ffa500"/>
<rect x="911" y="845" width="20" height="10" fill="url(#pa)"/>
<rect x="961" y="845" width="10" height="10" fill="#7fff00"/>
<rect x="971" y="845" width="10" height="10" fill="url(#pe)"/>
<rect x="981" y="845" width="30" height="10" fill="url(#pa)"/>
<rect x="1021" y="845" width="110" height="10" fill="#7fff00"/>
<rect x="955" y="765" width="12" height="62" fill="#ffff00"/>
<rect x="967" y="775" width="10" height="60" fill="#7fff00"/>
<rect x="977" y="800" width="9" height="35" fill="url(#pe)"/>
<rect x="977" y="775" width="4" height="25" fill="#ffff00"/>
<rect x="986" y="812" width="16" height="23" fill="url(#pa)"/>
<polygon points="911.8,607.9 916,610 925.6,623.8 930.9,634.5 936.2,643 938.9,649.3 932,648.3 925.6,647.2 911.8,645.1" fill="#f00000"/>
<polygon points="911.8,617.5 918.2,617.5 925.1,623.8 925.6,638.7 923.5,643 918.2,634.5 911.8,630.2" fill="#640000"/>
<polygon points="921,665 949,665 951,673 946,674.6 952.1,680.9 953.7,687.8 961,692 966.5,700 966.5,711 953,695 945,684 938,674 930,670" fill="#f00000"/>
<polygon points="941,674 945.8,674.6 952.1,680.9 953.7,687.8 949,687.3 944.7,682" fill="#640000"/>
<polygon points="1036.4,51.8 1043.5,50.9 1047.9,51.8 1048.8,58 1047,64.2 1047.9,72.2 1041.7,72.2 1037.3,68.6 1035.1,61.5" fill="#ff5000"/>
<polygon points="1047.9,51.8 1053.2,48.3 1055.9,50.9 1059.4,49.2 1064.7,52.7 1064.7,59.8 1062.1,63.3 1060.3,70.4 1060.3,76.6 1054.1,73.9 1047.9,72.2 1047,64.2 1048.8,58" fill="#f00000"/>
<polygon points="1016.5,38.5 1021.4,35 1049.7,35 1049.7,44.7 1047.9,51.8 1043.5,50.9 1036.4,51.8 1035.5,56.2 1030.2,58.9 1024.9,61.5 1021.8,66 1020,64.2 1017.4,56.2 1012.5,51.8 1016,49.2 1015.2,43.8" fill="#640000"/>
<polygon points="1052.3,43.8 1057.6,40.3 1062.9,38.5 1068.3,35 1078,35 1078,42.1 1076.2,46.5 1077.1,54.5 1079.3,59.8 1078,66 1073.6,70.4 1069.1,72.2 1064.7,73.9 1062.9,78.4 1060.3,76.6 1060.3,70.4 1062.1,63.3 1064.7,59.8 1064.7,52.7 1059.4,49.2 1055.9,50.9 1053.2,48.3" fill="#640000"/>
<polygon points="1065.6,41.2 1071.8,40.3 1072.7,46.5 1070.9,51.8 1066.5,50.9" fill="#f00000"/>
<polygon points="1068.3,59.8 1074.5,58.9 1073.6,65.1 1069.1,66" fill="url(#pa)"/>
<polygon points="1010.7,73.1 1017.8,72.2 1020,76.6 1017.8,81 1013.4,82.8 1010.3,79.2" fill="#640000"/>
<polygon points="1070.9,91.6 1074.5,88.1 1086,88.1 1089.5,91.6 1086,96.9 1080.6,100.5 1074.5,99.6 1071.8,96.1" fill="url(#pd)"/>
<polyline points="1035.1,61.5 1036.4,68.6 1039.9,73.9 1045.2,78.4 1050.6,79.2" fill="none" stroke="#640000" stroke-width="1.6"/>
<polygon points="985.4,116.7 993.9,115.6 996,120.9 1001.4,124.1 1007.7,127.3 1007.7,132.6 1003.5,135.8 996,130.5 991.8,128.4 990.7,124.1 985.4,124.1" fill="#640000"/>
<polygon points="982.2,156 987.5,151.7 992.9,147.5 997.1,140 1001.4,141.1 1003.5,147.5 1007.7,153.8 1012,162.3 1009.8,170.8 1007.7,181.5 1003.5,182.5 999.2,177.2 996,178.3 991.8,183.6 985.4,188.9 982.2,190" fill="#640000"/>
<polygon points="993.9,152.8 998.2,150.7 1003.5,156 1005.6,161.3 998.2,162.3 993.9,158.1" fill="url(#pc)"/>
<polygon points="996.8,263.8 1002.9,263 1009.1,265.6 1013.6,272.7 1016.2,281.5 1015.3,289.5 1011.8,287.7 1006.5,285.1 1001.2,281.5 997.6,272.7" fill="#640000"/>
<polygon points="1018,278.9 1020.6,281.5 1023.3,288.6 1022.4,294.8 1020.2,290.4" fill="#640000"/>
<polygon points="958.7,257.7 967.1,256.8 967.1,255 995,255 995,263.8 990.6,266.5 982.6,263 981.3,270 978.2,270.9 970.2,266.5 967.1,266.5 961.4,262.1" fill="#640000"/>
<polygon points="954.3,281.5 961.4,279.8 966.7,284.2 967.1,299.2 963.1,301 961.4,295.7 954.3,294.8 953.4,288.6" fill="url(#pd)"/>
<polygon points="987.6,343 994.7,340.4 999.1,343.9 1007.1,346.5 1008,353.6 1001.8,355.4 992.9,351.9 987.6,348.3" fill="#ffa500"/>
<polygon points="1001.8,331.5 1007.1,329.7 1009.8,325.3 1015.1,324.4 1016,328.8 1017.7,333.3 1014.2,335.9 1013.3,339.5 1008.9,337.7 1004.5,336.8" fill="#640000"/>
<polygon points="960.2,347.4 966.8,346.5 966.8,353.6 963.7,354.1 961.5,351" fill="#640000"/>
<polygon points="961.1,374.9 966.4,371.3 966.8,381.9 964.6,381.1 961.5,377.5" fill="#640000"/>
<polygon points="939.1,416.2 946.8,415.2 955.3,416.2 956.4,421.5 951.1,437.5 944.7,450.2 939.1,452.3" fill="#f00000"/>
<polygon points="944.7,422.6 950,419.4 954.3,420.5 953.2,425.8 949,435.4 943.7,444.9 941,448.1 940.5,439.6 942.1,431.1" fill="#640000"/>
<polygon points="1043.5,177 1049.8,176 1050.9,182.3 1048.8,186.6 1045.6,185.5 1042.9,181.3" fill="url(#pc)"/>
<polygon points="1095.5,178.1 1102.9,180.2 1104,182.3 1099.8,183.9 1096.6,181.3" fill="#008b00"/>
<polygon points="1113.6,165.4 1119.9,161.1 1119.9,174.9 1116.7,173.8 1114.6,170.7" fill="#f00000"/>
<polygon points="1078,279.2 1080.6,279.2 1080.6,286.1 1078,286.1" fill="#008b00"/>
<polygon points="1088.1,289.3 1094.4,288.3 1094.4,290.4 1089.1,292" fill="#008b00"/>
<polygon points="1092.3,683.1 1097.6,682 1105.1,687.8 1106.1,692.6 1100.8,696.9 1099.8,701.6 1092.3,701.6 1091.8,692.6" fill="#008b00"/>
<polygon points="1091.8,704.3 1102.9,703.2 1104,714.9 1092.3,712.8" fill="url(#pn)"/>
<polygon points="1106.1,714.9 1118.9,714.9 1118.9,720.2 1113.6,721.3 1114.6,728.7 1106.1,728.7 1106.1,724.5 1109.3,720.2" fill="#008b00"/>
<polygon points="1105.1,702.2 1118.9,705.4 1119.4,714.9 1106.1,714.9" fill="url(#pn)"/>
<polygon points="1046.7,224.6 1054.1,225.6 1056.2,234.1 1054.1,241.5 1050.9,236.2 1047.7,230.9" fill="url(#pc)"/>
<polygon points="1079.6,246.9 1084.9,245.8 1089.1,250 1086,257.5 1088.1,264.9 1082.8,263.8 1080.6,255.4" fill="url(#pb)"/>
</g></g>
</g>
<g class="g">
<rect x="56" y="77" width="19" height="354" fill="#fff"/>
<rect x="57" y="78" width="17" height="32" fill="#640000"/>
<rect x="57" y="110" width="17" height="32" fill="#f00000"/>
<rect x="57" y="142" width="17" height="32" fill="#ff5000"/>
<rect x="57" y="174" width="17" height="32" fill="#ffa500"/>
<rect x="57" y="206" width="17" height="32" fill="#ffff00"/>
<rect x="57" y="238" width="17" height="32" fill="#7fff00"/>
<rect x="57" y="270" width="17" height="32" fill="#008b00"/>
<rect x="57" y="302" width="17" height="32" fill="#00ffff"/>
<rect x="57" y="334" width="17" height="32" fill="#007fff"/>
<rect x="57" y="366" width="17" height="32" fill="#0000ff"/>
<rect x="57" y="398" width="17" height="32" fill="#8a2be2"/>
</g>
<g class="g">
<rect x="8" y="35" width="1" height="765" fill="#00ffff"/>
<rect x="147" y="35" width="1" height="765" fill="#00ffff"/>
<rect x="286" y="35" width="1" height="765" fill="#00ffff"/>
<rect x="425" y="35" width="1" height="765" fill="#00ffff"/>
<rect x="564" y="35" width="1" height="765" fill="#00ffff"/>
<rect x="703" y="35" width="1" height="765" fill="#00ffff"/>
<rect x="842" y="35" width="1" height="765" fill="#00ffff"/>
<rect x="1120" y="35" width="1" height="765" fill="#00ffff"/>
<rect x="981" y="35" width="1" height="188" fill="#00ffff"/>
<rect x="981" y="235" width="1" height="126" fill="#00ffff"/>
<rect x="981" y="373" width="1" height="127" fill="#00ffff"/>
<rect x="981" y="512" width="1" height="127" fill="#00ffff"/>
<rect x="981" y="651" width="1" height="149" fill="#00ffff"/>
<rect x="8" y="91" width="960" height="1" fill="#00ffff"/>
<rect x="990" y="91" width="131" height="1" fill="#00ffff"/>
<rect x="8" y="230" width="963" height="1" fill="#00ffff"/>
<rect x="999" y="230" width="122" height="1" fill="#00ffff"/>
<rect x="8" y="368" width="963" height="1" fill="#00ffff"/>
<rect x="999" y="368" width="122" height="1" fill="#00ffff"/>
<rect x="8" y="507" width="960" height="1" fill="#00ffff"/>
<rect x="1002" y="507" width="119" height="1" fill="#00ffff"/>
<rect x="8" y="646" width="960" height="1" fill="#00ffff"/>
<rect x="1002" y="646" width="119" height="1" fill="#00ffff"/>
<rect x="8" y="785" width="1113" height="1" fill="#00ffff"/>
</g>
<path d="M841.5 3.9 L840.0 8.0 L838.3 16.0 L837.4 24.0 L837.4 35.4 L836.2 39.8 L833.5 42.5 L829.1 51.3 L824.3 58.0 L827.0 60.2 L830.0 62.0 L833.5 61.6 L830.0 62.0 L830.0 66.4 L831.4 70.0 L831.4 76.1 L828.2 73.5 L824.7 73.5 L823.3 75.8 L825.6 79.6 L830.9 83.2 L836.2 86.2 L840.6 85.3 L835.7 88.0 L829.1 87.1 L825.6 84.6 L823.5 87.6 L823.8 92.0 L822.4 102.7 L818.5 108.0 L816.2 111.5 L812.3 111.5 L810.2 114.2 L811.1 120.4 L815.0 129.2 L821.2 136.3 L822.0 142.5 L823.9 146.2 L830.1 152.4 L831.9 157.7 L842.5 168.3 L851.3 173.6 L861.1 186.0 L867.3 190.4 L870.8 197.5 L877.0 202.0 L880.5 208.1 L891.2 217.0 L892.9 221.4 L899.1 232.0 L904.4 242.3 L901.4 247.6 L904.4 253.3 L908.8 257.2 L922.1 256.8 L924.8 254.7 L923.0 258.2 L913.3 261.2 L907.1 262.1 L906.2 263.9 L913.3 276.3 L921.2 284.2 L922.6 293.3 L927.9 304.8 L935.0 318.0 L937.1 325.1 L937.1 332.2 L932.3 334.9 L926.1 342.0 L925.8 344.6 L929.6 349.9 L932.3 360.5 L937.6 372.0 L946.5 385.3 L949.1 395.0 L947.7 414.5 L944.7 428.8 L938.5 438.6 L930.5 442.1 L924.0 447.4 L922.6 453.6 L912.8 463.4 L912.3 476.6 L908.4 480.2 L906.6 494.3 L901.3 512.0 L897.8 524.4 L890.7 531.5 L892.5 543.9 L891.6 560.0 L891.1 586.5 L898.7 605.1 L906.6 612.2 L914.6 621.9 L926.1 646.7 L928.8 651.2 L933.2 659.1 L936.7 670.6 L942.0 677.7 L950.9 692.7 L956.3 700.0 L964.3 709.2 L967.8 720.7 L966.2 741.4 L967.8 762.1 L972.4 772.5 L976.3 781.7 L976.3 796.6 L978.0 799.4" fill="none" stroke="#fff" stroke-width="1" shape-rendering="crispEdges"/>
<ellipse cx="748.2" cy="84.1" rx="3.2" ry="4.8" transform="rotate(25 748.2 84.1)" fill="none" stroke="#fff" stroke-width="1" shape-rendering="crispEdges"/>
<text class="t1" x="383.5" y="16" textLength="178.5" lengthAdjust="spacingAndGlyphs">BROADBAND ALBEDO</text>
<text class="t2" x="370.5" y="34" textLength="153.5" lengthAdjust="spacingAndGlyphs">Oct 17, 2017 04:45 UTC</text>
<text x="9.5" y="27" textLength="108" lengthAdjust="spacingAndGlyphs" style="font-size:11px;fill:#ffa500">NASA Langley (M04.0)</text>
<text class="cb" x="11" y="72" style="letter-spacing:0">BBALB (%)</text>
<text class="cb" x="51.3" y="82" text-anchor="end">100</text>
<text class="cb" x="51.3" y="114" text-anchor="end">80</text>
<text class="cb" x="51.3" y="146" text-anchor="end">70</text>
<text class="cb" x="51.3" y="178" text-anchor="end">60</text>
<text class="cb" x="51.3" y="210" text-anchor="end">50</text>
<text class="cb" x="51.3" y="242" text-anchor="end">40</text>
<text class="cb" x="51.3" y="274" text-anchor="end">30</text>
<text class="cb" x="51.3" y="306" text-anchor="end">25</text>
<text class="cb" x="51.3" y="338" text-anchor="end">20</text>
<text class="cb" x="51.3" y="370" text-anchor="end">15</text>
<text class="cb" x="51.3" y="402" text-anchor="end">10</text>
<text class="cb" x="51.3" y="434" text-anchor="end">0</text>
<text class="mono" transform="translate(139.5 34) scale(1.1 0.97)" xml:space="preserve">15W</text>
<text class="mono" transform="translate(276.5 34) scale(1.1 0.97)" xml:space="preserve">10W</text>
<text class="mono" transform="translate(422.0 34) scale(1.1 0.97)" xml:space="preserve">5W</text>
<text class="mono" transform="translate(558.0 34) scale(1.1 0.97)" xml:space="preserve">0</text>
<text class="mono" transform="translate(702.5 34) scale(1.1 0.97)" xml:space="preserve">5E</text>
<text class="mono" transform="translate(834.5 34) scale(1.1 0.97)" xml:space="preserve">10E</text>
<text class="mono" transform="translate(975.0 34) scale(1.1 0.97)" xml:space="preserve">15E</text>
<text class="mono" transform="translate(974.5 94) scale(1.1 0.97)" xml:space="preserve">0</text>
<text class="mono" transform="translate(980.5 233) scale(1.1 0.97)" xml:space="preserve">5S</text>
<text class="mono" transform="translate(971.0 371) scale(1.1 0.97)" xml:space="preserve">10S</text>
<text class="mono" transform="translate(975.0 510) scale(1.1 0.97)" xml:space="preserve">15S</text>
<text class="mono" transform="translate(975.0 649) scale(1.1 0.97)" xml:space="preserve">20S</text>
<text class="bot" transform="translate(314.3 846) scale(1.1 0.97)" xml:space="preserve">MT10  BROADBAND ALBEDO   OCT 17, 2017 04:45Z   NASA LARC</text>
</svg>
</body></html>
